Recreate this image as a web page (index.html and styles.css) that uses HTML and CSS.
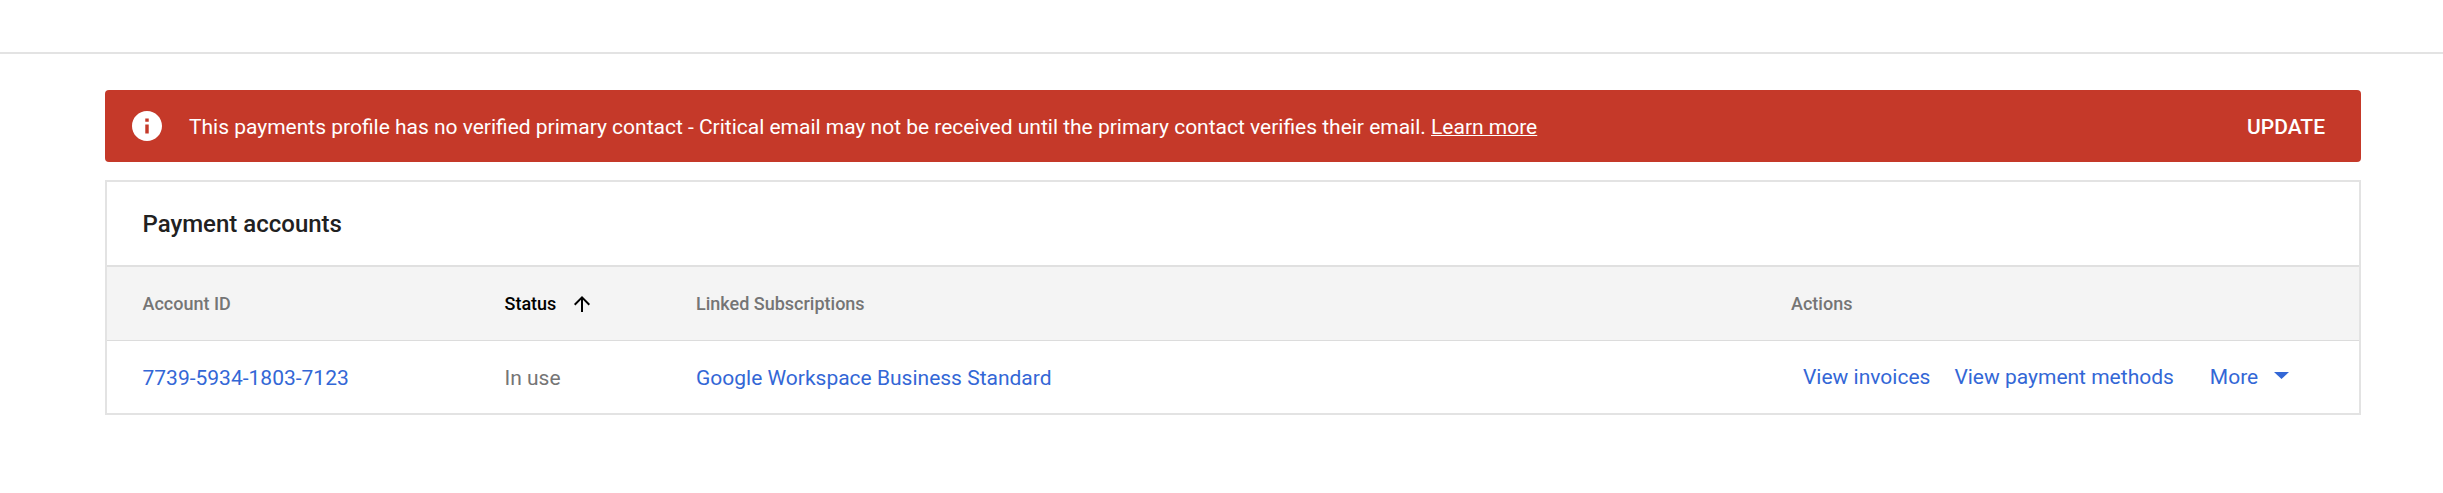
FILE: index.html
```html
<!DOCTYPE html>
<html lang="en">
<head>
<meta charset="utf-8">
<title>Payment accounts</title>
<link rel="stylesheet" href="styles.css">
</head>
<body>
<header class="topbar"></header>
<main class="content">
  <section class="banner">
    <svg class="banner-icon" viewBox="0 0 24 24"><path d="M12 2C6.480 2 2 6.480 2 12s4.480 10 10 10 10-4.480 10-10S17.520 2 12 2zm1.150 15h-2.300v-6h2.300zm0-7.800h-2.300V7h2.300z"/></svg>
    <p class="banner-text">This payments profile has no verified primary contact - Critical email may not be received until the primary contact verifies their email. <a class="learn">Learn more</a></p>
    <button class="update">UPDATE</button>
  </section>
  <section class="card">
    <h2 class="title">Payment accounts</h2>
    <div class="row head">
      <div>Account ID</div>
      <div class="sorted">Status
        <svg class="arrow" viewBox="0 0 24 24"><path d="M4 12l1.410 1.410L11 7.830V20h2V7.830l5.580 5.590L20 12l-8-8-8 8z"/></svg>
      </div>
      <div>Linked Subscriptions</div>
      <div>Actions</div>
    </div>
    <div class="row body">
      <div class="cell"><a class="link">7739-5934-1803-7123</a></div>
      <div class="cell">In use</div>
      <div class="cell"><a class="link">Google Workspace Business Standard</a></div>
      <div class="actions">
        <a class="link">View invoices</a>
        <a class="link">View payment methods</a>
        <a class="link more">More <svg class="caret" viewBox="0 0 15 7"><path d="M0 0h15L7.500 7z"/></svg></a>
      </div>
    </div>
  </section>
</main>
</body>
</html>
```
FILE: styles.css
```css
* { box-sizing: border-box; }
body {
  margin: 0;
  background: #fff;
  font-family: Roboto, sans-serif;
  font-size: 21px;
  color: #757575;
}
.topbar { height: 54px; border-bottom: 2px solid #e3e3e3; }
.content { padding: 36px 82px 0 105px; }
.banner {
  display: flex;
  align-items: center;
  height: 72px;
  padding: 0 36px 0 24px;
  border-radius: 4px;
  background: #c53929;
  color: #fff;
}
.banner-icon { width: 36px; height: 36px; fill: #fff; }
.banner-text {
  flex: 1;
  margin: 0 0 0 24px;
  padding-top: 1px;
  line-height: 32px;
  word-spacing: -0.050px;
}
.learn { text-decoration: underline; text-decoration-thickness: 1px; text-underline-offset: 1px; }
.update {
  padding: 1px 0 0;
  border: 0;
  background: none;
  color: #fff;
  font: 500 21px Roboto, sans-serif;
}
.card { margin-top: 18px; border: 2px solid #e3e3e3; }
.title {
  height: 83px;
  margin: 0;
  padding: 0 35.500px;
  font-size: 24px;
  font-weight: 500;
  line-height: 84px;
  color: #212121;
}
.row {
  display: grid;
  grid-template-columns: 362px 191.500px 1095px 1fr;
  align-items: center;
  padding-left: 35.500px;
}
.head {
  height: 76px;
  border-top: 2px solid #e0e0e0;
  border-bottom: 1px solid #dcdcdc;
  background: #f4f4f4;
  font-size: 18px;
  font-weight: 500;
}
.sorted { display: flex; align-items: center; gap: 13.500px; color: #000; }
.arrow { width: 24px; height: 24px; fill: #000; }
.body { height: 72px; }
.cell { padding-top: 1px; }
.link { color: #3367d6; }
.actions { display: flex; align-items: center; gap: 24px; padding-left: 12px; }
.more { display: flex; align-items: center; gap: 16px; margin-left: 12px; }
.caret { width: 15px; height: 7px; margin-bottom: 3px; fill: #3367d6; }
```
